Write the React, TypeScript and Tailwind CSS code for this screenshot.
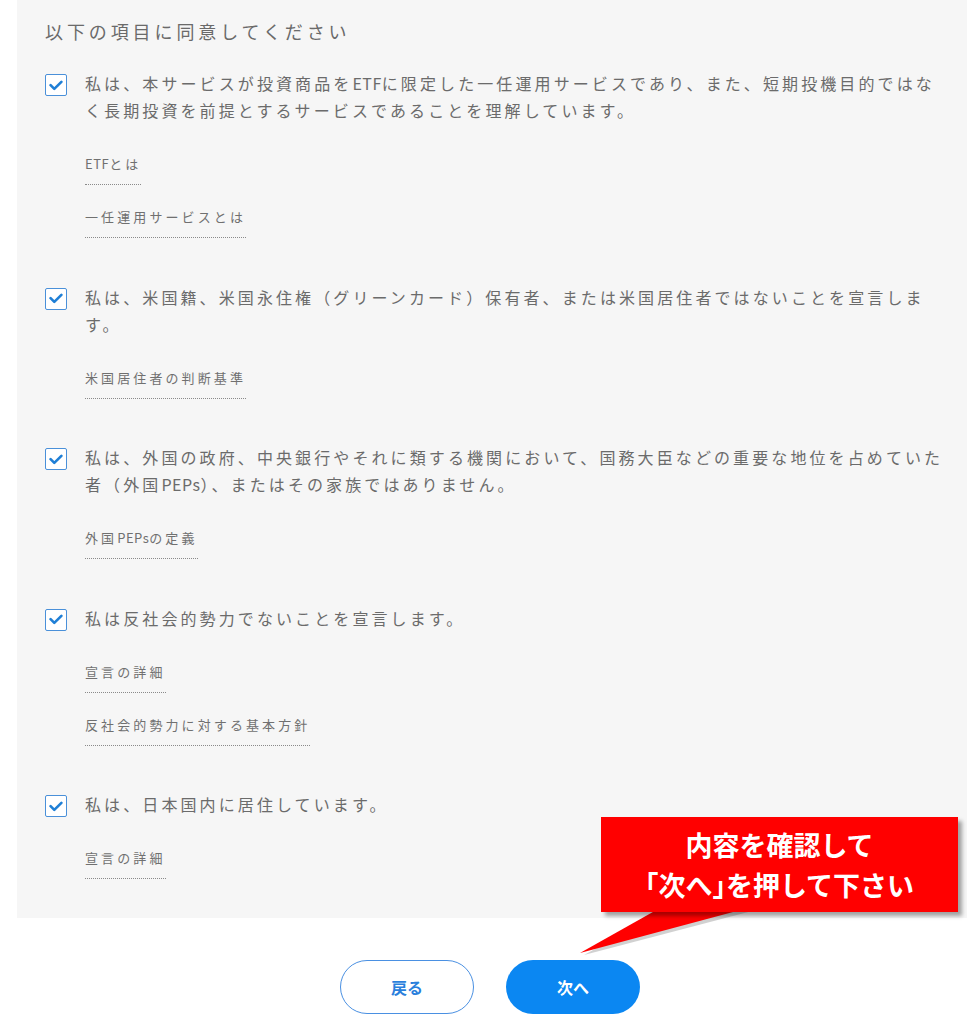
import React from "react";

const font = { fontFamily: '"Noto Sans CJK JP", "Noto Sans", sans-serif' };

function Check() {
  return (
    <div className="mt-[4px] flex h-[22px] w-[22px] shrink-0 items-center justify-center rounded-[2px] border border-[#4a90d9] bg-white">
      <svg width="14" height="11" viewBox="0 0 14 11" fill="none">
        <path d="M1.6 5.2 L5.3 8.9 L12.4 1.8" stroke="#1f7fd6" strokeWidth="2.6" strokeLinecap="round" strokeLinejoin="round" />
      </svg>
    </div>
  );
}

function Lat({ children }: { children: React.ReactNode }) {
  return <span className="tracking-[0.5px]">{children}</span>;
}

function LinkItem({ text }: { text: React.ReactNode }) {
  return (
    <span className="block w-fit border-b border-dotted border-[#8a8a8a] pb-[10px] text-[13px] leading-[20px] tracking-[3.1px] text-[#707070]">
      {text}
    </span>
  );
}

function Item({ lines, links }: { lines: React.ReactNode[]; links: React.ReactNode[] }) {
  return (
    <div>
      <div className="flex gap-[18px]">
        <Check />
        <p className="text-[16px] leading-[27px] tracking-[3.1px] text-[#6b6b6b] whitespace-nowrap">
          {lines.map((l, i) => (
            <React.Fragment key={i}>
              {i > 0 && <br />}
              {l}
            </React.Fragment>
          ))}
        </p>
      </div>
      <div className="mt-[30px] flex flex-col gap-[22px] pl-[40px]">
        {links.map((t, i) => (
          <LinkItem key={i} text={t} />
        ))}
      </div>
    </div>
  );
}

export default function App() {
  return (
    <div className="relative h-[1024px] w-[980px] overflow-hidden bg-white" style={font}>
      <div className="ml-[17px] w-[950px] bg-[#f6f6f6] pl-[28px] pr-[12px] pt-[18px] pb-[39px]">
        <h2 className="text-[18px] leading-[27px] tracking-[3.9px] text-[#6a6a6a]">以下の項目に同意してください</h2>
        <div className="mt-[25px] flex flex-col gap-[45.5px]">
          <Item
            lines={[
              <>
                私は、本サービスが投資商品を<Lat>ETF</Lat>に限定した一任運用サービスであり、また、短期投機目的ではな
              </>,
              "く長期投資を前提とするサービスであることを理解しています。",
            ]}
            links={[
              <>
                <Lat>ETF</Lat>とは
              </>,
              "一任運用サービスとは",
            ]}
          />
          <Item
            lines={[
              "私は、米国籍、米国永住権（グリーンカード）保有者、または米国居住者ではないことを宣言しま",
              "す。",
            ]}
            links={["米国居住者の判断基準"]}
          />
          <Item
            lines={[
              "私は、外国の政府、中央銀行やそれに類する機関において、国務大臣などの重要な地位を占めていた",
              <>
                者（外国<Lat>PEPs</Lat>）、またはその家族ではありません。
              </>,
            ]}
            links={[
              <>
                外国<Lat>PEPs</Lat>の定義
              </>,
            ]}
          />
          <Item lines={["私は反社会的勢力でないことを宣言します。"]} links={["宣言の詳細", "反社会的勢力に対する基本方針"]} />
          <Item lines={["私は、日本国内に居住しています。"]} links={["宣言の詳細"]} />
        </div>
      </div>

      <div className="mt-[42px] flex justify-center gap-[32px]">
        <button className="flex h-[54px] w-[134px] items-center justify-center rounded-full border border-[#4a90e2] bg-white text-[16px] font-bold text-[#2a7fdc]">
          戻る
        </button>
        <button className="flex h-[54px] w-[134px] items-center justify-center rounded-full bg-[#0b87f2] text-[16px] font-bold text-white">
          次へ
        </button>
      </div>

      {/* callout overlay */}
      <svg className="absolute left-[570px] top-[900px]" width="200" height="60" viewBox="570 900 200 60">
        <polygon points="664,911 752,911 584,955" fill="#9a9a9a" opacity="0.45" />
        <polygon points="660,908 748,908 580,953" fill="#ff0000" />
      </svg>
      <div className="absolute left-[601px] top-[817px] flex h-[95px] w-[357px] flex-col items-center justify-center bg-[#ff0000] text-center text-[27px] font-bold leading-[40px] text-white shadow-[4px_4px_4px_rgba(0,0,0,0.35)]">
        <span>内容を確認して</span>
        <span className="[font-feature-settings:'halt']">
          「次へ」<span className="[font-feature-settings:normal]">を押して下さい</span>
        </span>
      </div>
    </div>
  );
}
